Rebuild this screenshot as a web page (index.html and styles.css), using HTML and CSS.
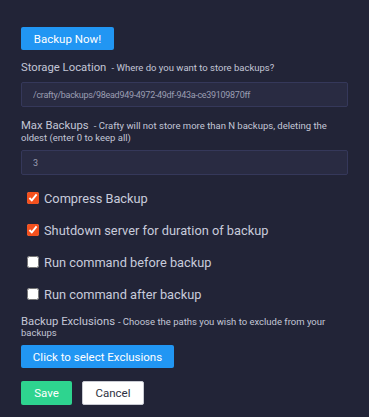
FILE: index.html
```html
<!DOCTYPE html>
<html lang="en">
<head>
<meta charset="UTF-8">
<meta name="viewport" content="width=device-width, initial-scale=1.0">
<title>Backups</title>
<link rel="stylesheet" href="styles.css">
</head>
<body>

<div class="panel">
  <button class="btn btn-blue">Backup Now!</button>

  <label class="field-label first">Storage Location <small>&nbsp;- Where do you want to store backups?</small></label>
  <input class="text-input" type="text" value="/crafty/backups/98ead949-4972-49df-943a-ce39109870ff">

  <label class="field-label">Max Backups <small>&nbsp;- Crafty will not store more than N backups, deleting the oldest (enter 0 to keep all)</small></label>
  <input class="text-input" type="number" value="3">

  <div class="checks">
    <label class="check-row"><input type="checkbox" checked> Compress Backup</label>
    <label class="check-row"><input type="checkbox" checked> Shutdown server for duration of backup</label>
    <label class="check-row"><input type="checkbox"> Run command before backup</label>
    <label class="check-row"><input type="checkbox"> Run command after backup</label>
  </div>

  <label class="field-label excl">Backup Exclusions <small>- Choose the paths you wish to exclude from your backups</small></label>
  <button class="btn btn-blue wide">Click to select Exclusions</button>

  <div class="actions">
    <button class="btn btn-green">Save</button>
    <button class="btn btn-white">Cancel</button>
  </div>
</div>

</body>
</html>
```

FILE: styles.css
```css
body {
  margin: 0;
  background-color: #222437;
  color: #c3c6d6;
  font-family: Roboto, "Liberation Sans", sans-serif;
}
.panel {
  padding: 27px 21px 0;
  width: 327px;
}
.btn {
  display: block;
  box-sizing: border-box;
  height: 23px;
  padding: 0;
  border: none;
  border-radius: 2px;
  font-family: inherit;
  font-size: 11.5px;
  text-align: center;
  white-space: nowrap;
  cursor: pointer;
}
.btn-blue {
  background-color: #2196f3;
  color: #fff;
  width: 93px;
}
.btn-blue.wide {
  width: 153px;
  margin-top: 7px;
}
.btn-green {
  background-color: #2ed48f;
  color: #fff;
  width: 51px;
  height: 24px;
}
.btn-white {
  background-color: #fff;
  color: #2d3142;
  width: 62px;
  height: 24px;
  border: 1px solid #c9cbd3;
}
.field-label {
  display: block;
  font-size: 11.3px;
  line-height: 12px;
  margin: 13px 0 6px;
}
.field-label.first {
  margin-top: 12px;
  margin-bottom: 8px;
}
.field-label small {
  font-size: 9.5px;
  line-height: 10px;
}
.field-label.excl {
  line-height: 11px;
  margin: 6px 0 0;
}
.field-label.excl small {
  line-height: 9px;
}
.text-input {
  display: block;
  box-sizing: border-box;
  width: 327px;
  height: 25px;
  margin: 0;
  padding: 0 11px;
  background-color: #292b42;
  border: 1px solid #35385a;
  border-radius: 2px;
  color: #9b9eb2;
  font-family: inherit;
  font-size: 9px;
  letter-spacing: -0.3px;
  -moz-appearance: textfield;
}
.text-input::-webkit-inner-spin-button {
  -webkit-appearance: none;
}
.checks {
  margin-top: 7px;
}
.check-row {
  display: flex;
  align-items: center;
  height: 32px;
  padding-left: 6px;
  font-size: 12.8px;
  color: #c8cbdb;
}
.check-row input {
  width: 12px;
  height: 12px;
  margin: 0 5px 0 0;
  accent-color: #f4511e;
}
.actions {
  display: flex;
  gap: 10px;
  margin-top: 13px;
}
```
